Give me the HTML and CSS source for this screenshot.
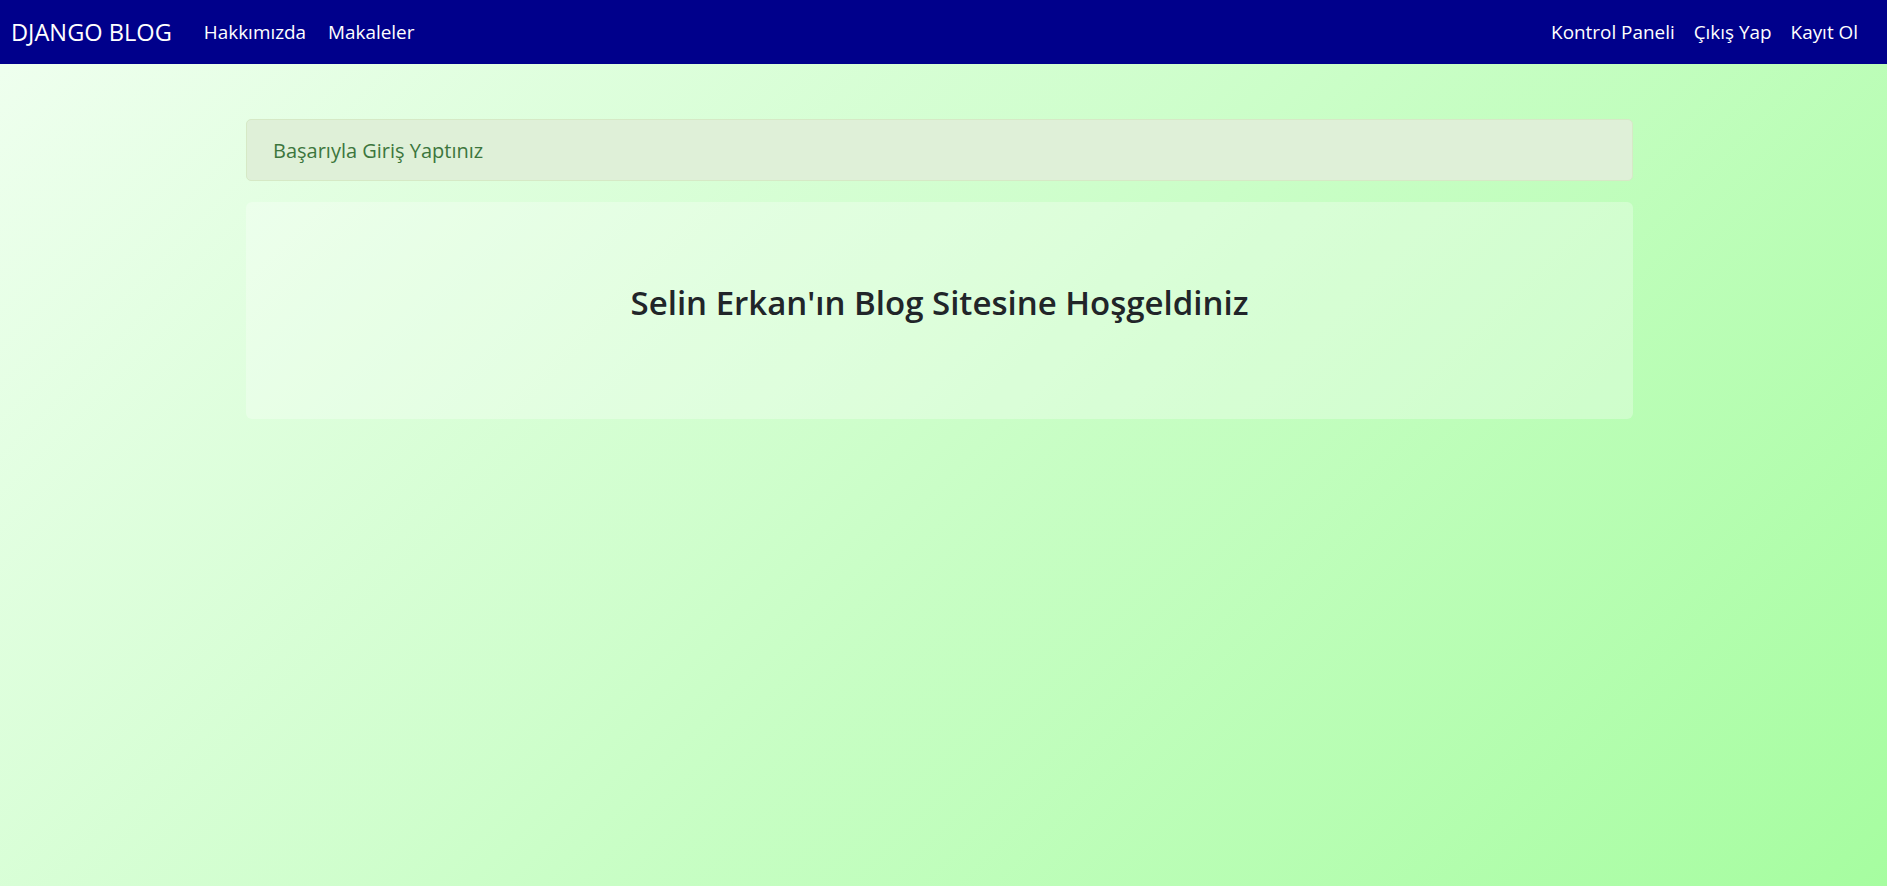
FILE: index.html
```html
<!DOCTYPE html>
<html lang="tr">
<head>
<meta charset="utf-8">
<title>Django Blog</title>
<link rel="stylesheet" href="styles.css">
</head>
<body>
<nav class="navbar">
  <a class="brand" href="#">DJANGO BLOG</a>
  <ul class="nav-left">
    <li><a href="#">Hakkımızda</a></li>
    <li><a href="#">Makaleler</a></li>
  </ul>
  <ul class="nav-right">
    <li><a href="#">Kontrol Paneli</a></li>
    <li><a href="#">Çıkış Yap</a></li>
    <li><a href="#">Kayıt Ol</a></li>
  </ul>
</nav>
<main class="container">
  <div class="alert">Başarıyla Giriş Yaptınız</div>
  <section class="jumbotron">
    <h2 class="title">Selin Erkan'ın Blog Sitesine Hoşgeldiniz</h2>
  </section>
</main>
</body>
</html>
```
FILE: styles.css
```css
html, body {
  margin: 0;
  padding: 0;
  height: 100%;
}
body {
  font-family: "Open Sans", "Noto Sans", sans-serif;
  background: linear-gradient(135deg, #f0fff0 0%, #a6fda0 100%);
  background-attachment: fixed;
  min-height: 100vh;
}
.navbar {
  height: 64px;
  background: #00008b;
  display: flex;
  align-items: center;
  padding: 0 29px 0 11px;
  box-sizing: border-box;
}
.brand {
  color: #fff;
  text-decoration: none;
  font-size: 23.6px;
  margin-right: 32px;
}
.navbar ul {
  list-style: none;
  margin: 0;
  padding: 0;
  display: flex;
  gap: 22px;
}
.navbar .nav-right {
  margin-left: auto;
  gap: 19px;
}
.navbar ul a {
  color: #fff;
  text-decoration: none;
  font-size: 18.9px;
}
.container {
  width: 1387px;
  margin-left: 246px;
  padding-top: 55px;
}
.alert {
  height: 62px;
  box-sizing: border-box;
  background: #dff0d8;
  border: 1px solid #d6e9c6;
  border-radius: 5px;
  color: #3c763d;
  font-size: 20px;
  display: flex;
  align-items: center;
  padding-left: 26px;
}
.jumbotron {
  margin-top: 21px;
  height: 217px;
  box-sizing: border-box;
  background: rgba(255, 255, 255, 0.3);
  border-radius: 6px;
  padding-top: 81px;
}
.title {
  margin: 0;
  text-align: center;
  font-size: 33px;
  font-weight: 600;
  color: #212529;
  line-height: 1.2;
}
```
